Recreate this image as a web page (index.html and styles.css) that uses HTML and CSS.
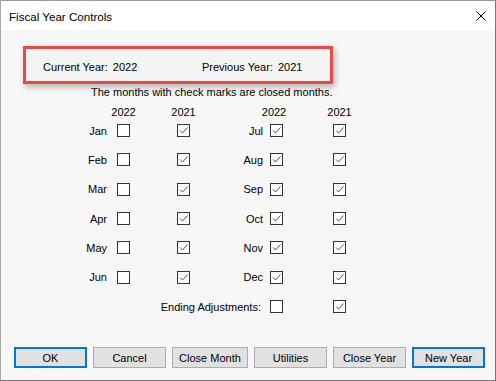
FILE: index.html
```html
<!DOCTYPE html>
<html lang="en">
  <head>
    <meta charset="UTF-8" />
    <title>Fiscal Year Controls</title>
    <link rel="stylesheet" href="styles.css">
  </head>
  <body>
    <div class="window">
      <div class="title-bar">
        <span class="title">Fiscal Year Controls</span>
        <svg class="close-icon" width="10" height="10" viewBox="0 0 10 10">
          <path d="M0.5 0.5 L9.5 9.5 M9.5 0.5 L0.5 9.5" stroke="#000" stroke-width="1" fill="none" />
        </svg>
      </div>

      <div class="dialog-body">
        <div class="year-box">
          <span class="year-item">Current Year:<span class="year-value">2022</span></span>
          <span class="year-item">Previous Year:<span class="year-value">2021</span></span>
        </div>

        <div class="note">The months with check marks are closed months.</div>

        <div class="months-grid" id="months-grid">
          <span class="col-head c2">2022</span>
          <span class="col-head c4">2021</span>
          <span class="col-head c6 shift">2022</span>
          <span class="col-head c8">2021</span>
        </div>

        <div class="button-row">
          <button class="win-button default">OK</button>
          <button class="win-button">Cancel</button>
          <button class="win-button wide">Close Month</button>
          <button class="win-button">Utilities</button>
          <button class="win-button">Close Year</button>
          <button class="win-button default">New Year</button>
        </div>
      </div>
    </div>

    <script>
      // month rows: [left month, 2022, 2021, right month, 2022, 2021]
      const rows = [
        ["Jan", false, true, "Jul", true, true],
        ["Feb", false, true, "Aug", true, true],
        ["Mar", false, true, "Sep", true, true],
        ["Apr", false, true, "Oct", true, true],
        ["May", false, true, "Nov", true, true],
        ["Jun", false, true, "Dec", true, true],
      ];
      const grid = document.getElementById("months-grid");
      const tick =
        '<svg width="11" height="11" viewBox="0 0 11 11"><path d="M2 5.5 L4.5 8 L9.5 2.5" stroke="#555" stroke-width="1" fill="none"/></svg>';

      function box(checked, col) {
        const b = document.createElement("span");
        b.className = "check-box " + col;
        if (checked) b.innerHTML = tick;
        return b;
      }

      function label(text, cls) {
        const l = document.createElement("span");
        l.className = "month-label " + cls;
        l.textContent = text;
        return l;
      }

      rows.forEach((r) => {
        grid.appendChild(label(r[0], "c1"));
        grid.appendChild(box(r[1], "c2"));
        grid.appendChild(box(r[2], "c4"));
        grid.appendChild(label(r[3], "c5"));
        grid.appendChild(box(r[4], "c6"));
        grid.appendChild(box(r[5], "c8"));
      });

      grid.appendChild(label("Ending Adjustments:", "ending"));
      grid.appendChild(box(false, "c6"));
      grid.appendChild(box(true, "c8"));
    </script>
  </body>
</html>
```

FILE: styles.css
```css
body {
  margin: 0;
  padding: 0;
  background-color: #ffffff;
  font-family: "Liberation Sans", Arial, sans-serif;
  font-size: 11px;
  color: #000;
}

.window {
  width: 496px;
  height: 381px;
  box-sizing: border-box;
  border: 1px solid #777;
  border-left-color: #a8a8a8;
  border-top-color: #999;
  display: flex;
  flex-direction: column;
  background-color: #f7f7f7;
}

.title-bar {
  height: 30px;
  background-color: #fff;
  display: flex;
  align-items: center;
  padding: 0 9px 0 8px;
  flex-shrink: 0;
}

.title {
  font-size: 11.6px;
  flex: 1;
  padding-top: 1px;
}

.close-icon {
  display: block;
}

.dialog-body {
  flex: 1;
  display: flex;
  flex-direction: column;
  padding-bottom: 12px;
}

/* highlighted year box */
.year-box {
  margin: 15px 0 0 22px;
  width: 310px;
  height: 38px;
  box-sizing: border-box;
  border: 3px solid #ef4646;
  box-shadow: 2px 3px 6px rgba(0, 0, 0, 0.28);
  background-color: #f4f4f4;
  display: flex;
  align-items: center;
  padding: 3px 0 0 17px;
}

.year-item {
  width: 159px;
  flex-shrink: 0;
  white-space: nowrap;
}

.year-item + .year-item {
  width: auto;
}

.year-value {
  margin-left: 5px;
}

.note {
  margin: 1px 0 0 90px;
  line-height: 14px;
}

/* months grid */
.months-grid {
  margin-top: 9px;
  display: grid;
  grid-template-columns: 116px 13px 47px 13px 80px 13px 50px 13px;
  grid-template-rows: 8px;
  grid-auto-rows: 29.33px;
  align-items: center;
}

.col-head {
  line-height: 8px;
  justify-self: center;
  white-space: nowrap;
}

.col-head.shift {
  margin-right: 5px;
}

.c1 { grid-column: 1; }
.c2 { grid-column: 2; }
.c4 { grid-column: 4; }
.c5 { grid-column: 5; }
.c6 { grid-column: 6; }
.c8 { grid-column: 8; }

.month-label {
  text-align: right;
  white-space: nowrap;
}

.month-label.c1 {
  padding-right: 10px;
}

.month-label.c5 {
  padding-right: 7px;
}

.month-label.ending {
  grid-column: 1 / 6;
  padding-right: 9px;
}

.check-box {
  width: 13px;
  height: 13px;
  box-sizing: border-box;
  border: 1px solid #333;
  background-color: #fff;
  display: flex;
  align-items: center;
  justify-content: center;
}

.check-box svg {
  display: block;
}

/* bottom buttons */
.button-row {
  margin-top: auto;
  display: flex;
  gap: 6px;
  padding-left: 13px;
}

.win-button {
  width: 73px;
  height: 21px;
  box-sizing: border-box;
  padding: 0;
  border: 1px solid #adadad;
  background-color: #e1e1e1;
  font-family: "Liberation Sans", Arial, sans-serif;
  font-size: 11px;
  color: #000;
}

.win-button.wide {
  width: 76px;
}

.win-button.default {
  border: 2px solid #0078d7;
}
```
